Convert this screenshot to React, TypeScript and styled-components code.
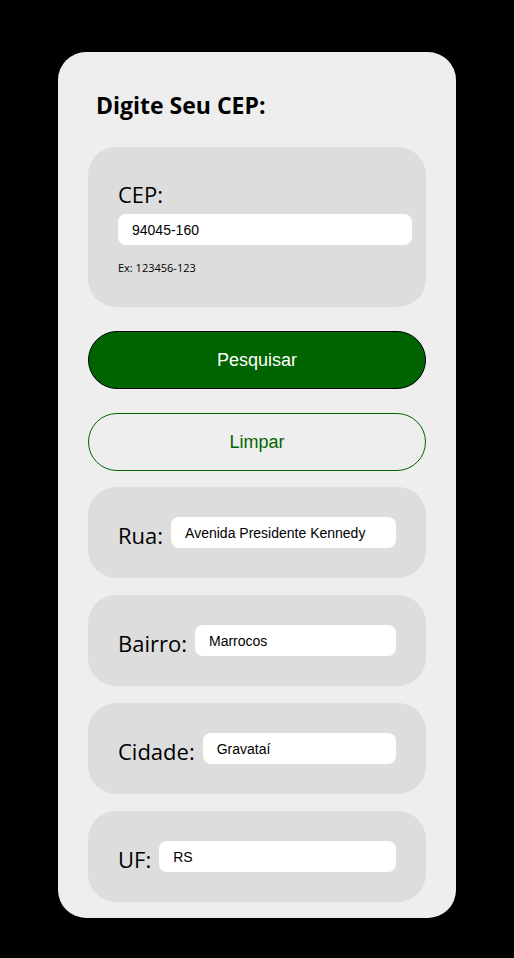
import React from 'react'
import styled, { createGlobalStyle } from 'styled-components'

const GlobalStyle = createGlobalStyle`
  html, body {
    margin: 0;
    padding: 0;
    background: #000000;
  }
  body {
    font-family: 'Open Sans', 'Noto Sans', sans-serif;
  }
`

const Page = styled.main`
  display: flex;
  justify-content: center;
  padding: 52px 0 40px;
  min-height: 958px;
  box-sizing: border-box;
`

const Panel = styled.section`
  width: 398px;
  box-sizing: border-box;
  background: #eeeeee;
  border-radius: 28px;
  padding: 36px 30px 16px;
  display: flex;
  flex-direction: column;
`

const Title = styled.h2`
  margin: 0 0 25px 8px;
  font-size: 23px;
  font-weight: 700;
  line-height: 34px;
  color: #000;
`

const CepCard = styled.div`
  background: #dddddd;
  border-radius: 28px;
  padding: 30px 14px 31px 30px;
  display: flex;
  flex-direction: column;
`

const CepLabel = styled.label`
  font-size: 22px;
  line-height: 34px;
  color: #000;
  margin-bottom: 3px;
`

const Input = styled.input<{ $grow?: boolean }>`
  flex: ${(p) => (p.$grow ? '1' : 'none')};
  min-width: 0;
  height: 31px;
  box-sizing: border-box;
  border: none;
  border-radius: 8px;
  background: #ffffff;
  padding: 0 14px;
  font-family: 'Liberation Sans', Arial, sans-serif;
  font-size: 14px;
  color: #000;
  outline: none;
`

const Hint = styled.small`
  font-size: 11px;
  margin-top: 15px;
  line-height: 16px;
  color: #000;
`

const Button = styled.button<{ $variant: 'solid' | 'outline' }>`
  height: 58px;
  border-radius: 29px;
  font-family: 'Liberation Sans', Arial, sans-serif;
  font-size: 18px;
  cursor: pointer;
  margin-top: 24px;
  background: ${(p) => (p.$variant === 'solid' ? '#006400' : 'transparent')};
  color: ${(p) => (p.$variant === 'solid' ? '#ffffff' : '#006400')};
  border: 1px solid ${(p) => (p.$variant === 'solid' ? '#000000' : '#006400')};
`

const FieldList = styled.div`
  display: flex;
  flex-direction: column;
  gap: 17px;
  margin-top: 16px;
`

const FieldCard = styled.div`
  background: #dddddd;
  border-radius: 28px;
  height: 91px;
  box-sizing: border-box;
  padding: 0 30px;
  display: flex;
  align-items: center;
  gap: 8px;
`

const FieldLabel = styled.label`
  font-size: 22px;
  line-height: 30px;
  color: #000;
  padding-top: 4px;
`

const fields = [
  { label: 'Rua:', value: 'Avenida Presidente Kennedy' },
  { label: 'Bairro:', value: 'Marrocos' },
  { label: 'Cidade:', value: 'Gravataí' },
  { label: 'UF:', value: 'RS' },
]

export default function App() {
  return (
    <>
      <GlobalStyle />
      <Page>
        <Panel>
          <Title>Digite Seu CEP:</Title>
          <CepCard>
            <CepLabel htmlFor="cep">CEP:</CepLabel>
            <Input id="cep" defaultValue="94045-160" />
            <Hint>Ex: 123456-123</Hint>
          </CepCard>
          <Button $variant="solid">Pesquisar</Button>
          <Button $variant="outline">Limpar</Button>
          <FieldList>
            {fields.map((f) => (
              <FieldCard key={f.label}>
                <FieldLabel>{f.label}</FieldLabel>
                <Input $grow defaultValue={f.value} readOnly />
              </FieldCard>
            ))}
          </FieldList>
        </Panel>
      </Page>
    </>
  )
}
